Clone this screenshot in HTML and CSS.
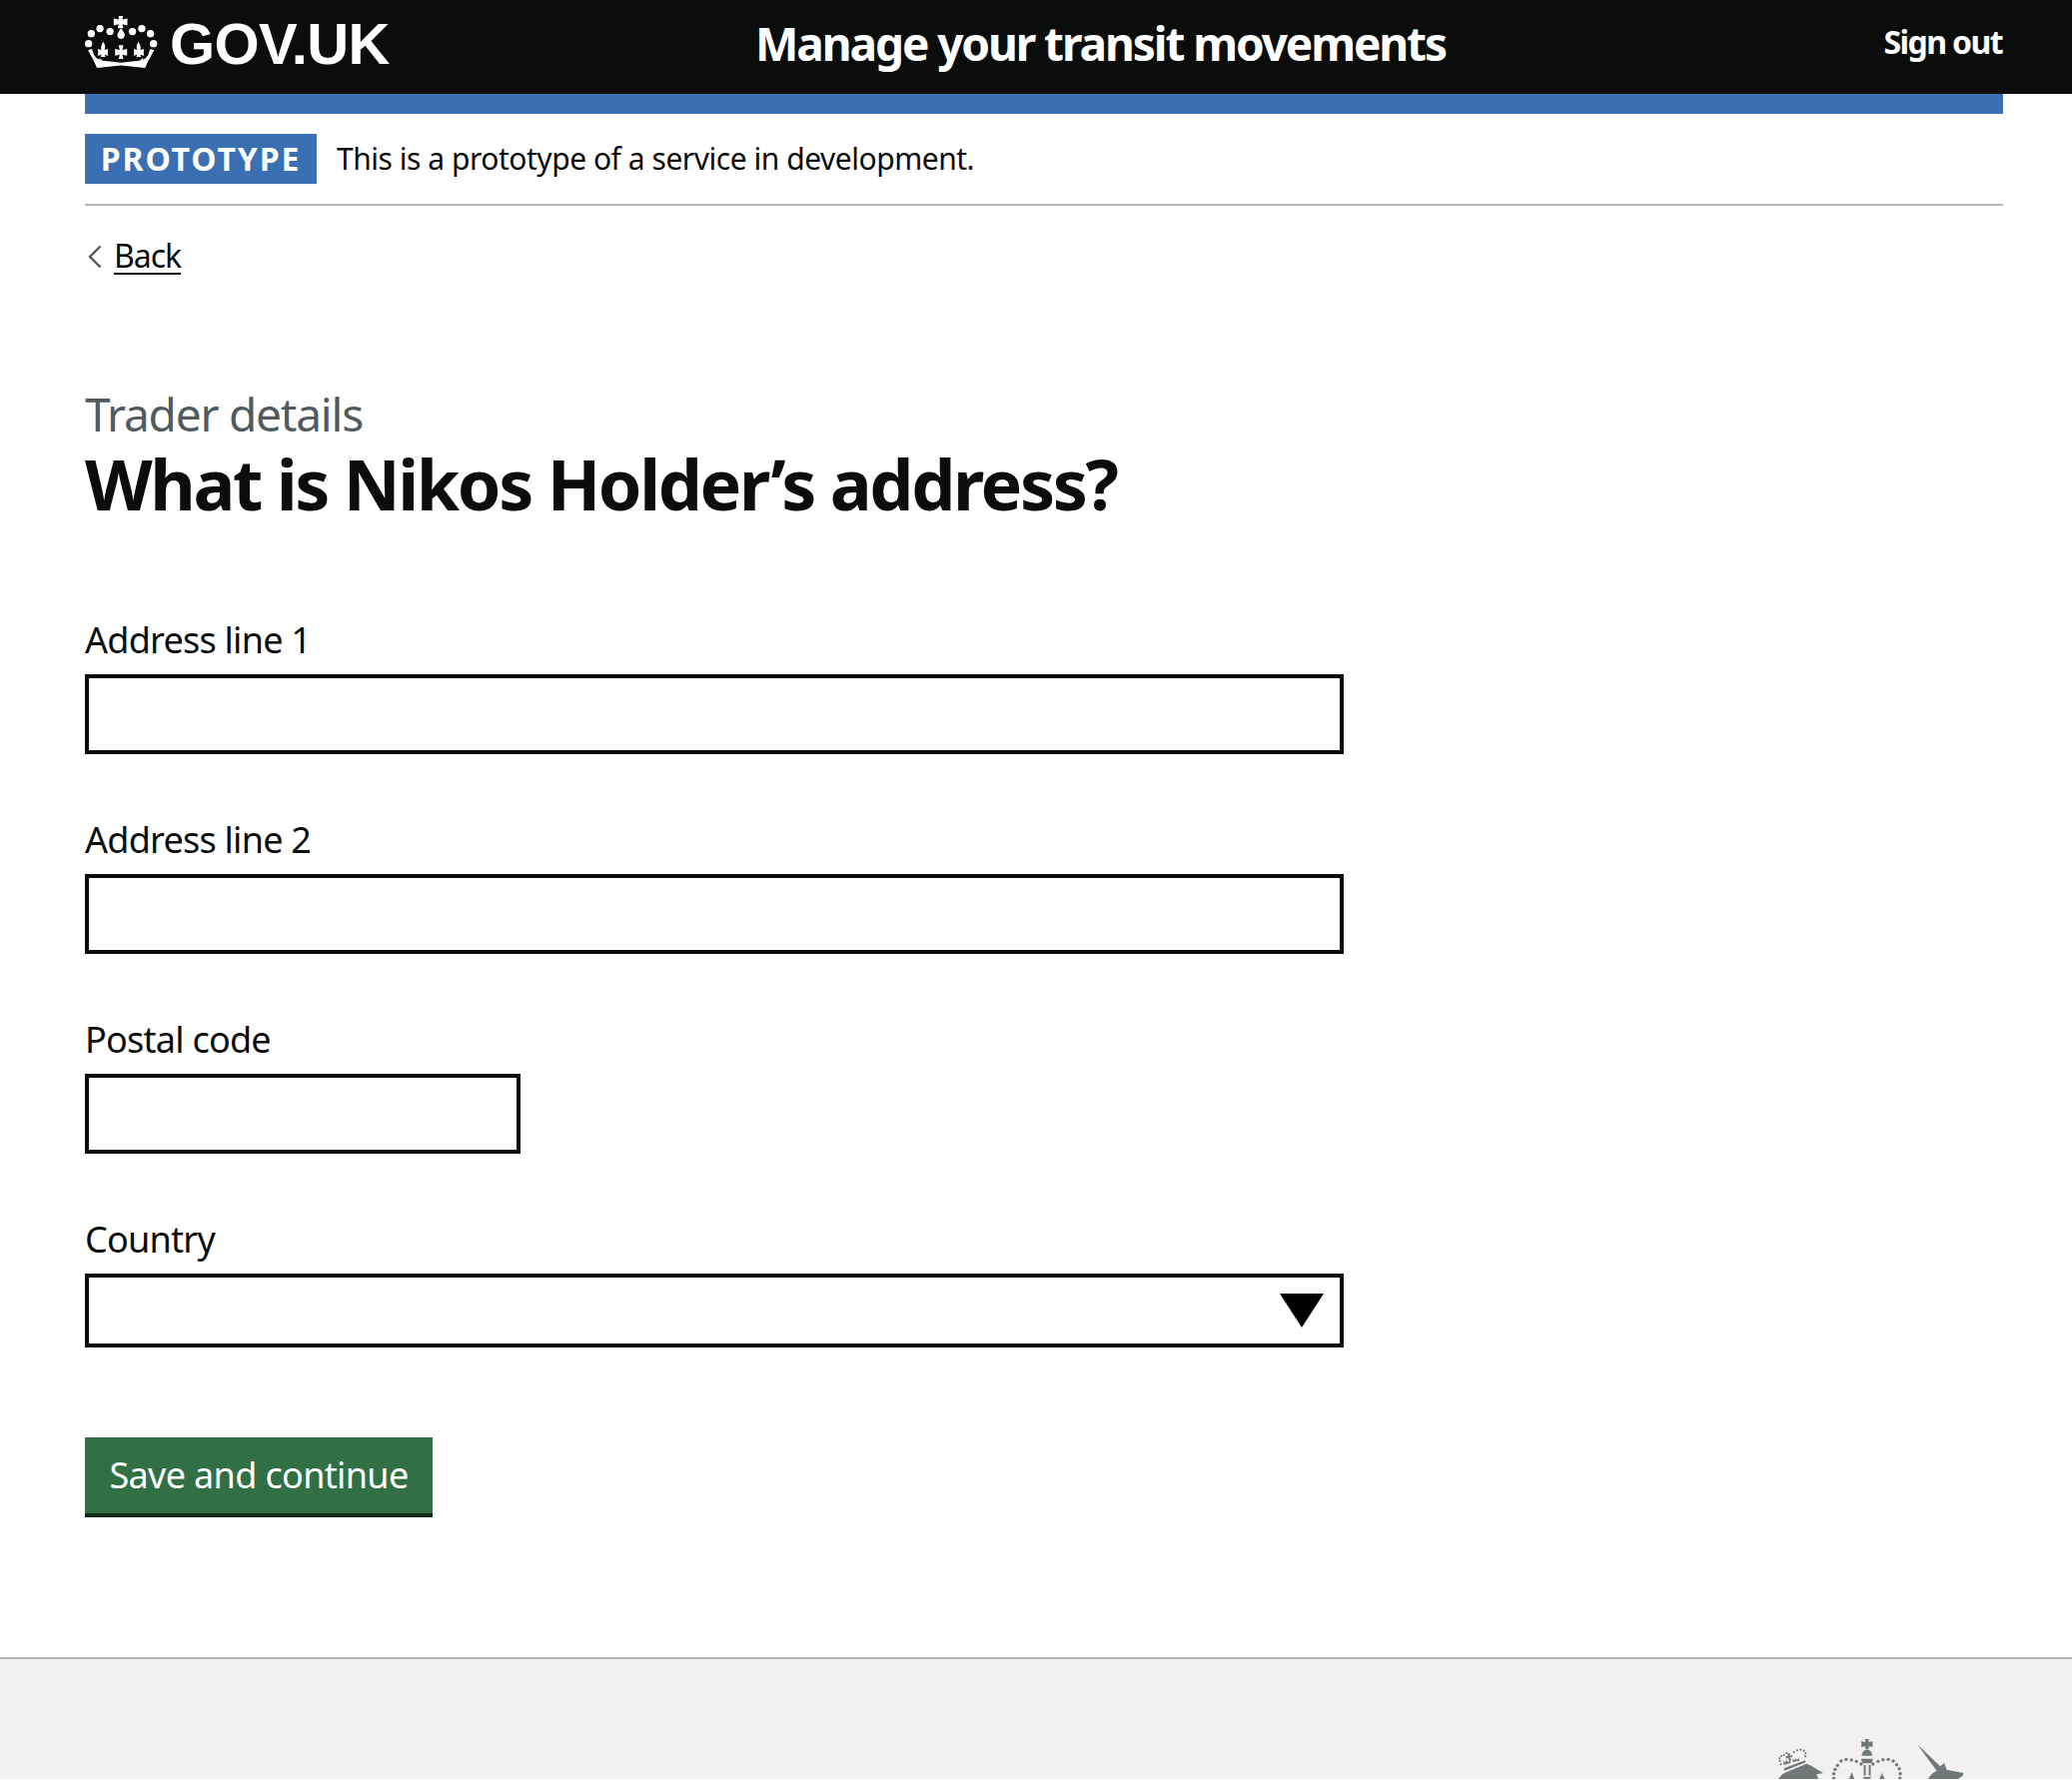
FILE: index.html
```
<!DOCTYPE html>
<html lang="en">
<head>
<meta charset="utf-8">
<title>What is Nikos Holder’s address?</title>
<link rel="stylesheet" href="styles.css">
</head>
<body>
<header class="header">
  <div class="container header-inner">
    <a class="logo" href="#">
      <svg class="crown" viewBox="45 45 218 160" aria-hidden="true">
        <g fill="#fff">
          <circle cx="56" cy="130" r="11"/><circle cx="64" cy="100" r="11"/><circle cx="90" cy="85" r="11"/><circle cx="120" cy="94" r="11"/>
          <circle cx="187" cy="94" r="11"/><circle cx="215" cy="85" r="11"/><circle cx="241" cy="100" r="11"/><circle cx="250" cy="130" r="11"/>
          <path d="M146 47h13l-2 11 15-3v21l-15-4 3 12h-17l3-12-15 4V55l15 3z"/>
          <path d="M153 84c6 8 11 15 11 21 0 7-5 11-11 11s-11-4-11-11c0-6 5-13 11-21z"/>
          <path d="M146 135h14l-3 14 14-3v20l-14-3 3 13h-14l3-13-14 3v-20l14 3z"/>
          <path d="M100 124c4 7 7 13 5 21l-2 4 11-3c-1 7-1 15 0 21l-10-5 2 8H92l3-8-12 5c2-6 2-14 0-21l11 3c-2-8 0-16 6-25z"/>
          <path d="M205 124c-4 7-7 13-5 21l2 4-11-3c1 7 1 15 0 21l10-5-2 8h14l-3-8 12 5c-2-6-2-14 0-21l-11 3c2-8 0-16-6-25z"/>
          <path d="M54 150l12-4 6 18 7 9 10 6-3-7 12 9 30 3 25 3 25-3 30-3 12-9-3 7 10-6 7-9 6-18 12 4-17 30-10 23-72-8-72 8-10-23z"/>
        </g>
      </svg>
      <span class="logo-text">GOV.UK</span>
    </a>
    <a class="service" href="#">Manage your transit movements</a>
    <a class="signout" href="#">Sign out</a>
  </div>
</header>
<div class="container">
  <div class="accent"></div>
  <div class="phase">
    <strong class="tag">PROTOTYPE</strong>
    <span class="phase-text">This is a prototype of a service in development.</span>
  </div>
  <a class="back" href="#">
    <svg class="chevron" viewBox="0 0 14 24" aria-hidden="true"><path d="M12.5 1.5L2 12l10.5 10.5" fill="none" stroke="#505a5f" stroke-width="2.4"/></svg>
    <span class="back-text">Back</span>
  </a>
  <main class="main">
    <span class="caption">Trader details</span>
    <h1 class="title">What is Nikos Holder’s address?</h1>
    <form class="form">
      <div class="group">
        <label class="label" for="a1">Address line 1</label>
        <input class="input" id="a1" type="text">
      </div>
      <div class="group">
        <label class="label" for="a2">Address line 2</label>
        <input class="input" id="a2" type="text">
      </div>
      <div class="group">
        <label class="label" for="pc">Postal code</label>
        <input class="input input-short" id="pc" type="text">
      </div>
      <div class="group group-select">
        <label class="label" for="co">Country</label>
        <div class="select-wrap">
          <select class="select" id="co"><option></option></select>
          <svg class="arrow" viewBox="0 0 44 34" aria-hidden="true"><path d="M0 0h44L22 34z" fill="#000"/></svg>
        </div>
      </div>
      <button class="button" type="button">Save and continue</button>
    </form>
  </main>
</div>
<footer class="footer">
  <div class="container footer-inner">
    <svg class="crest" viewBox="245 300 565 126" aria-hidden="true">
      <g fill="#6f7779">
        <path d="M246 426c5-10 14-18 26-22l58-24 14 6 36 22-20 4 6 14z"/>
        <path d="M262 394l64-24 2 6-64 25z"/>
        <path d="M273 349h8l-1 7 7-2v7l-7-1 4 11-6 2-3-11-6 3-2-7 7-2z"/>
        <path d="M262 384l-2-12 7 4 2-8 6 8 5-7 2 9-20 6z"/><path d="M288 375l1-10 5 5 3-7 4 6 5-6 3 8-21 4z"/>
        <circle cx="250" cy="372" r="3.2"/><circle cx="249" cy="364" r="3.2"/><circle cx="254" cy="357" r="3.2"/><circle cx="262" cy="354" r="3.2"/><circle cx="270" cy="348" r="3.2"/><circle cx="292" cy="345" r="3.2"/><circle cx="302" cy="340" r="3.2"/><circle cx="312" cy="338" r="3.2"/><circle cx="322" cy="341" r="3.2"/><circle cx="327" cy="349" r="3.2"/><circle cx="326" cy="358" r="3.2"/><circle cx="253" cy="381" r="3.2"/>
        <path d="M506 306h12l-1 9 12-2v17l-12-2 1 7h-12l1-7-12 2v-17l12 2z"/>
        <path d="M512 337c10 3 15 9 16 19h-32c1-10 6-16 16-19z"/>
        <path d="M494 365h36l-4 14h-28z"/>
        <rect x="502" y="384" width="6" height="32"/><rect x="517" y="384" width="6" height="32"/>
        <path d="M498 420h28l-7 6h-14z"/><path d="M466 406l8 20h-16z"/><path d="M557 408l8 18h-16z"/>
        <circle cx="412" cy="424" r="5"/><circle cx="412" cy="410" r="5"/><circle cx="416" cy="397" r="5"/><circle cx="423" cy="385" r="5"/><circle cx="434" cy="372" r="5"/><circle cx="449" cy="367" r="5"/><circle cx="465" cy="369" r="5"/><circle cx="480" cy="373" r="5"/><circle cx="494" cy="381" r="5"/>
        <circle cx="530" cy="381" r="5"/><circle cx="545" cy="373" r="5"/><circle cx="560" cy="368" r="5"/><circle cx="576" cy="367" r="5"/><circle cx="591" cy="372" r="5"/><circle cx="601" cy="383" r="5"/><circle cx="609" cy="395" r="5"/><circle cx="612" cy="410" r="5"/><circle cx="611" cy="424" r="5"/>
        <path d="M663 322l69 66 12-10 8 20 50 10-2 8-14 10H696c6-12 14-20 26-24z"/>
      </g>
    </svg>
  </div>
</footer>
</body>
</html>
```
FILE: styles.css
```
* { box-sizing: border-box; }
html, body { margin: 0; padding: 0; background: #fff; }
body {
  height: 1782px;
  overflow: hidden;
  font-family: "Noto Sans", "Open Sans", sans-serif;
  color: #0b0c0c;
}
a { color: inherit; text-decoration: none; }
.container { width: 1920px; margin-left: 85px; }

.header { background: #0b0c0c; height: 94px; color: #fff; }
.header-inner { display: flex; align-items: center; height: 94px; }
.logo { display: flex; align-items: center; width: 671px; flex: none; }
.crown { width: 73px; height: 54px; margin-right: 12px; flex: none; position: relative; top: -5px; }
.logo-text { font-family: "Liberation Sans", sans-serif; font-weight: 700; font-size: 58px; line-height: 94px; letter-spacing: -0.6px; position: relative; top: -3px; }
.service { font-weight: 700; font-size: 46px; letter-spacing: -2.1px; line-height: 94px; position: relative; top: -4px; }
.signout { margin-left: auto; padding-right: 1px; font-weight: 700; font-size: 32px; letter-spacing: -1.6px; line-height: 94px; position: relative; top: -5px; }

.accent { height: 20px; background: #3a6fb4; }
.phase { display: flex; align-items: center; height: 92px; padding-top: 20px; padding-bottom: 20px; border-bottom: 2px solid #b1b4b6; }
.tag { display: block; width: 232px; height: 50px; background: #3a6fb4; color: #fff; font-size: 32px; font-weight: 700; line-height: 50px; letter-spacing: 1.85px; text-align: center; white-space: nowrap; }
.phase-text { margin-left: 20px; font-size: 30px; line-height: 48px; letter-spacing: -0.47px; white-space: nowrap; }

.back { display: flex; align-items: center; height: 44px; margin-top: 29px; width: max-content; }
.chevron { width: 14px; height: 24px; margin-left: 3px; margin-right: 12px; }
.back-text { font-size: 32px; line-height: 34px; letter-spacing: -1px; border-bottom: 2px solid #0b0c0c; }

.main { padding-top: 110px; }
.caption { display: block; font-size: 46px; line-height: 50px; letter-spacing: -1.2px; color: #505a5f; }
.title { margin: 5px 0 0; font-size: 70px; line-height: 80px; font-weight: 700; letter-spacing: -2.4px; }
.form { margin-top: 101px; width: 1260px; }
.group { height: 200px; }
.group-select { height: 214px; }
.label { display: block; font-size: 36px; line-height: 32px; height: 50px; letter-spacing: -0.75px; }
.input { display: block; width: 1260px; height: 80px; border: 4px solid #0b0c0c; background: #fff; border-radius: 0; padding: 0 10px; font: inherit; }
.input-short { width: 436px; }
.select-wrap { position: relative; width: 1260px; height: 74px; }
.select { display: block; width: 100%; height: 74px; border: 4px solid #0b0c0c; background: #fff; appearance: none; -webkit-appearance: none; border-radius: 0; padding: 0 10px; font: inherit; }
.arrow { position: absolute; left: 1196px; top: 20px; width: 44px; height: 34px; }
.button { display: block; width: 348px; height: 80px; padding: 2px 0 2px; border: 0; border-bottom: 4px solid #0f2b15; border-radius: 0; background: #317045; color: #fff; font-family: inherit; font-size: 36px; letter-spacing: -0.65px; line-height: 72px; text-align: center; }

.footer { margin-top: 140px; background: #f2f1ef; border-top: 2px solid #b1b4b6; height: 122px; overflow: hidden; }
.footer-inner { display: flex; justify-content: flex-end; padding: 78px 37px 0 0; }
.crest { width: 188px; height: 42px; flex: none; }
```
